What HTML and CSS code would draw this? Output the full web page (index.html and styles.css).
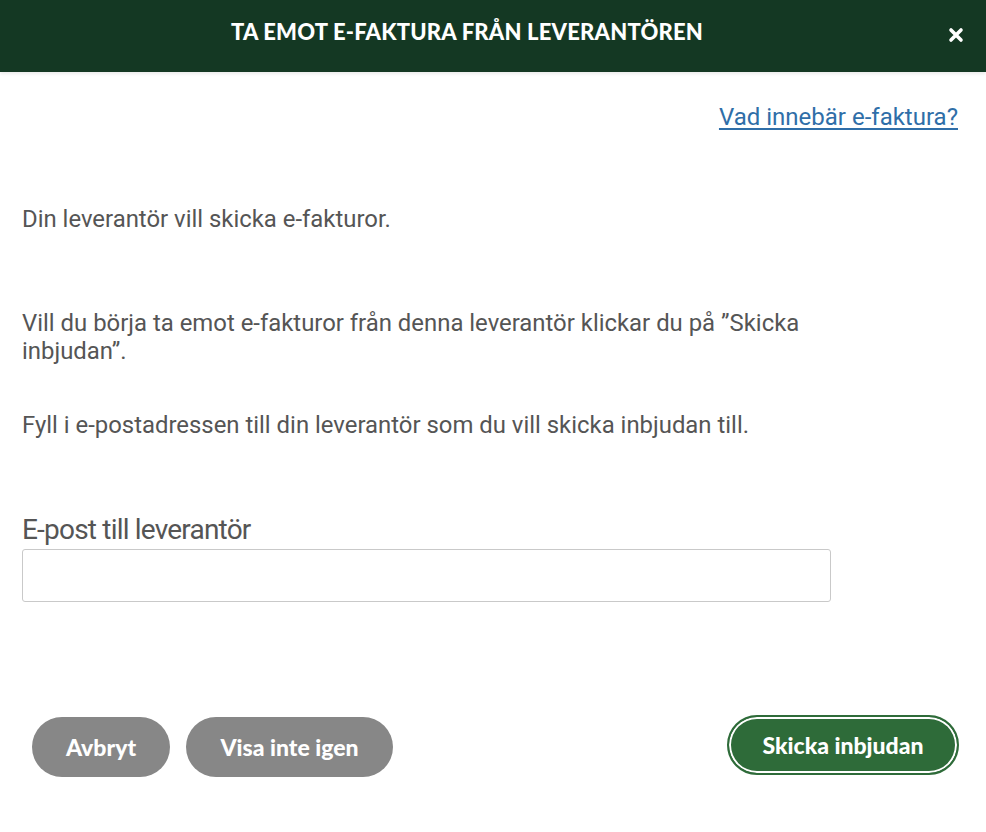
FILE: index.html
```html
<!DOCTYPE html>
<html lang="sv">
<head>
<meta charset="utf-8">
<title>Ta emot e-faktura</title>
<link rel="stylesheet" href="styles.css">
</head>
<body>
<div class="modal">
  <header class="modal-header">
    <h1 class="modal-title">TA EMOT E-FAKTURA FRÅN LEVERANTÖREN</h1>
    <button class="close" aria-label="Stäng">
      <svg width="16" height="16" viewBox="0 0 16 16"><path d="M3 3 L13 13 M13 3 L3 13" stroke="#fff" stroke-width="3.6" stroke-linecap="round"/></svg>
    </button>
  </header>
  <main class="modal-body">
    <div class="link-row"><a href="#" class="info-link">Vad innebär e-faktura?</a></div>
    <div class="content">
      <p class="p1">Din leverantör vill skicka e-fakturor.</p>
      <p class="p2">Vill du börja ta emot e-fakturor från denna leverantör klickar du på ”Skicka inbjudan”.</p>
      <p class="p3">Fyll i e-postadressen till din leverantör som du vill skicka inbjudan till.</p>
      <label class="field-label" for="email">E-post till leverantör</label>
      <input class="field-input" id="email" type="email">
    </div>
  </main>
  <footer class="modal-footer">
    <div class="left-buttons">
      <button class="btn btn-gray btn-cancel">Avbryt</button>
      <button class="btn btn-gray btn-hide">Visa inte igen</button>
    </div>
    <button class="btn btn-green">Skicka inbjudan</button>
  </footer>
</div>
</body>
</html>
```
FILE: styles.css
```css
* { box-sizing: border-box; }
html, body { margin: 0; padding: 0; background: #fff; }
body { font-family: Roboto, "Noto Sans", sans-serif; color: #555; }
.modal { width: 986px; }
.modal-header {
  height: 72px;
  background: #143823;
  display: flex;
  align-items: center;
  justify-content: center;
  position: relative;
  box-shadow: 0 2px 3px rgba(0,0,0,0.08);
  padding-right: 52px;
}
.modal-title {
  margin: 0;
  color: #fff;
  font-family: Lato, "Open Sans", sans-serif;
  font-weight: 900;
  font-size: 22px;
  letter-spacing: 0.2px;
  margin-top: -10px;
}
.close {
  position: absolute;
  right: 22px;
  top: 27px;
  width: 16px;
  height: 16px;
  padding: 0;
  border: 0;
  background: transparent;
  display: flex;
}
.modal-body { padding: 0 28px 0 22px; }
.link-row { display: flex; justify-content: flex-end; padding-top: 30px; }
.info-link {
  font-size: 24px;
  color: #2f6ea8;
  text-decoration: underline;
  text-underline-offset: 3px;
  line-height: 30px;
}
.content { width: 809px; }
.content p { margin: 0; font-size: 23.9px; line-height: 28px; }
.p1 { margin-top: 73px !important; }
.p2 { margin-top: 76px !important; }
.p3 { margin-top: 46px !important; }
.field-label {
  display: block;
  margin-top: 76px;
  font-size: 28px;
  line-height: 30px;
  letter-spacing: -0.8px;
}
.field-input {
  display: block;
  width: 809px;
  height: 53px;
  margin-top: 4px;
  border: 1px solid #c9c9c9;
  border-radius: 3px;
  font-size: 18px;
  padding: 0 12px;
}
.modal-footer {
  display: flex;
  justify-content: space-between;
  align-items: center;
  padding: 113px 27px 0 32px;
}
.left-buttons { display: flex; gap: 16px; }
.btn {
  height: 60px;
  border-radius: 30px;
  font-family: Lato, "Open Sans", sans-serif;
  font-weight: 900;
  font-size: 23px;
  color: #fff;
  border: 0;
  padding: 0;
}
.btn-gray { background: #878787; }
.btn-cancel { width: 138px; }
.btn-hide { width: 207px; }
.btn-green {
  width: 232px;
  margin-bottom: 4px;
  background: #2e6b39;
  border: 2px solid #2e6b39;
  box-shadow: inset 0 0 0 2px #fff;
}
```
